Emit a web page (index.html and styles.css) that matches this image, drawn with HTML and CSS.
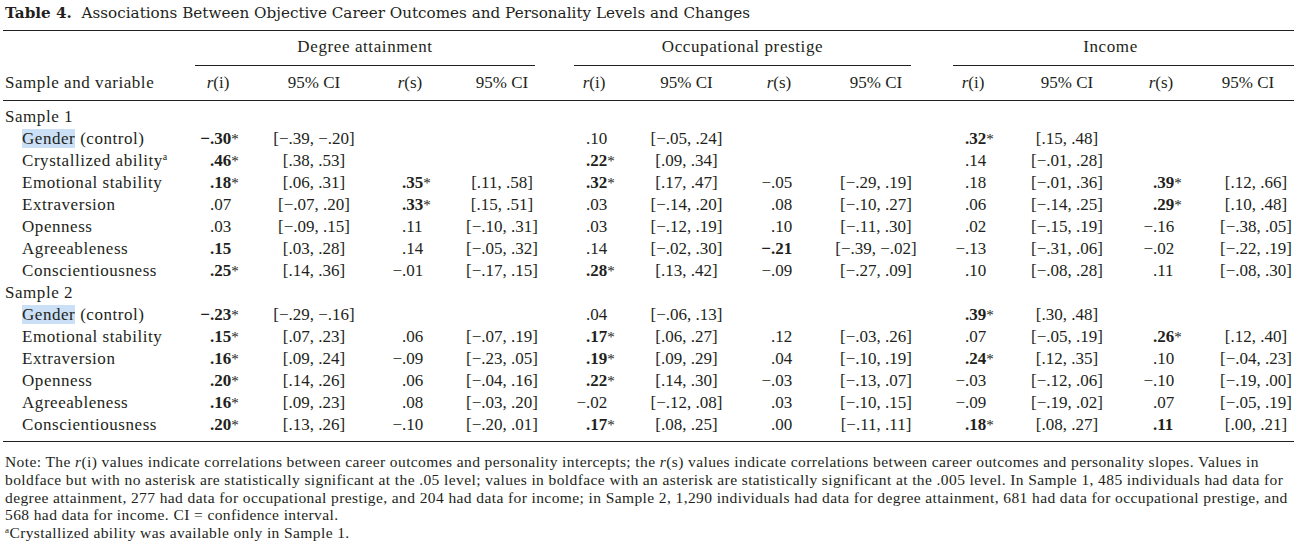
FILE: index.html
```html
<!DOCTYPE html>
<html>
<head>
<meta charset="utf-8">
<title>Table 4</title>
<link rel="stylesheet" href="styles.css">
</head>
<body>
<div class="title"><b>Table 4.</b>&nbsp; Associations Between Objective Career Outcomes and Personality Levels and Changes</div>
<div class="rule"></div>
<div class="groups">
  <div></div>
  <div class="grp deg">Degree attainment</div>
  <div class="grp occ">Occupational prestige</div>
  <div class="grp inc">Income</div>
</div>
<div class="row head">
  <div class="sample">Sample and variable</div>
  <div class="hc"><i>r</i>(i)</div><div class="hc">95% CI</div><div class="hc"><i>r</i>(s)</div><div class="hc">95% CI</div>
  <div class="hc"><i>r</i>(i)</div><div class="hc">95% CI</div><div class="hc"><i>r</i>(s)</div><div class="hc">95% CI</div>
  <div class="hc"><i>r</i>(i)</div><div class="hc">95% CI</div><div class="hc"><i>r</i>(s)</div><div class="hc">95% CI</div>
</div>
<div class="rule"></div>
<div class="body">
  <div class="row"><div class="sample">Sample 1</div></div>
  <div class="row">
    <div class="lab"><span class="hl">Gender</span> (control)</div>
    <div class="r"><b><span class="m">−</span>.30</b><span class="st">*</span></div><div class="ci">[−.39, −.20]</div><div></div><div></div>
    <div class="r">.10</div><div class="ci">[−.05, .24]</div><div></div><div></div>
    <div class="r"><b>.32</b><span class="st">*</span></div><div class="ci">[.15, .48]</div><div></div><div></div>
  </div>
  <div class="row">
    <div class="lab">Crystallized ability<span class="sup">a</span></div>
    <div class="r"><b>.46</b><span class="st">*</span></div><div class="ci">[.38, .53]</div><div></div><div></div>
    <div class="r"><b>.22</b><span class="st">*</span></div><div class="ci">[.09, .34]</div><div></div><div></div>
    <div class="r">.14</div><div class="ci">[−.01, .28]</div><div></div><div></div>
  </div>
  <div class="row">
    <div class="lab">Emotional stability</div>
    <div class="r"><b>.18</b><span class="st">*</span></div><div class="ci">[.06, .31]</div><div class="r"><b>.35</b><span class="st">*</span></div><div class="ci">[.11, .58]</div>
    <div class="r"><b>.32</b><span class="st">*</span></div><div class="ci">[.17, .47]</div><div class="r"><span class="m">−</span>.05</div><div class="ci">[−.29, .19]</div>
    <div class="r">.18</div><div class="ci">[−.01, .36]</div><div class="r"><b>.39</b><span class="st">*</span></div><div class="ci cl">[.12, .66]</div>
  </div>
  <div class="row">
    <div class="lab">Extraversion</div>
    <div class="r">.07</div><div class="ci">[−.07, .20]</div><div class="r"><b>.33</b><span class="st">*</span></div><div class="ci">[.15, .51]</div>
    <div class="r">.03</div><div class="ci">[−.14, .20]</div><div class="r">.08</div><div class="ci">[−.10, .27]</div>
    <div class="r">.06</div><div class="ci">[−.14, .25]</div><div class="r"><b>.29</b><span class="st">*</span></div><div class="ci cl">[.10, .48]</div>
  </div>
  <div class="row">
    <div class="lab">Openness</div>
    <div class="r">.03</div><div class="ci">[−.09, .15]</div><div class="r">.11</div><div class="ci">[−.10, .31]</div>
    <div class="r">.03</div><div class="ci">[−.12, .19]</div><div class="r">.10</div><div class="ci">[−.11, .30]</div>
    <div class="r">.02</div><div class="ci">[−.15, .19]</div><div class="r"><span class="m">−</span>.16</div><div class="ci cl">[−.38, .05]</div>
  </div>
  <div class="row">
    <div class="lab">Agreeableness</div>
    <div class="r"><b>.15</b></div><div class="ci">[.03, .28]</div><div class="r">.14</div><div class="ci">[−.05, .32]</div>
    <div class="r">.14</div><div class="ci">[−.02, .30]</div><div class="r"><b><span class="m">−</span>.21</b></div><div class="ci">[−.39, −.02]</div>
    <div class="r"><span class="m">−</span>.13</div><div class="ci">[−.31, .06]</div><div class="r"><span class="m">−</span>.02</div><div class="ci cl">[−.22, .19]</div>
  </div>
  <div class="row">
    <div class="lab">Conscientiousness</div>
    <div class="r"><b>.25</b><span class="st">*</span></div><div class="ci">[.14, .36]</div><div class="r"><span class="m">−</span>.01</div><div class="ci">[−.17, .15]</div>
    <div class="r"><b>.28</b><span class="st">*</span></div><div class="ci">[.13, .42]</div><div class="r"><span class="m">−</span>.09</div><div class="ci">[−.27, .09]</div>
    <div class="r">.10</div><div class="ci">[−.08, .28]</div><div class="r">.11</div><div class="ci cl">[−.08, .30]</div>
  </div>
  <div class="row"><div class="sample">Sample 2</div></div>
  <div class="row">
    <div class="lab"><span class="hl">Gender</span> (control)</div>
    <div class="r"><b><span class="m">−</span>.23</b><span class="st">*</span></div><div class="ci">[−.29, −.16]</div><div></div><div></div>
    <div class="r">.04</div><div class="ci">[−.06, .13]</div><div></div><div></div>
    <div class="r"><b>.39</b><span class="st">*</span></div><div class="ci">[.30, .48]</div><div></div><div></div>
  </div>
  <div class="row">
    <div class="lab">Emotional stability</div>
    <div class="r"><b>.15</b><span class="st">*</span></div><div class="ci">[.07, .23]</div><div class="r">.06</div><div class="ci">[−.07, .19]</div>
    <div class="r"><b>.17</b><span class="st">*</span></div><div class="ci">[.06, .27]</div><div class="r">.12</div><div class="ci">[−.03, .26]</div>
    <div class="r">.07</div><div class="ci">[−.05, .19]</div><div class="r"><b>.26</b><span class="st">*</span></div><div class="ci cl">[.12, .40]</div>
  </div>
  <div class="row">
    <div class="lab">Extraversion</div>
    <div class="r"><b>.16</b><span class="st">*</span></div><div class="ci">[.09, .24]</div><div class="r"><span class="m">−</span>.09</div><div class="ci">[−.23, .05]</div>
    <div class="r"><b>.19</b><span class="st">*</span></div><div class="ci">[.09, .29]</div><div class="r">.04</div><div class="ci">[−.10, .19]</div>
    <div class="r"><b>.24</b><span class="st">*</span></div><div class="ci">[.12, .35]</div><div class="r">.10</div><div class="ci cl">[−.04, .23]</div>
  </div>
  <div class="row">
    <div class="lab">Openness</div>
    <div class="r"><b>.20</b><span class="st">*</span></div><div class="ci">[.14, .26]</div><div class="r">.06</div><div class="ci">[−.04, .16]</div>
    <div class="r"><b>.22</b><span class="st">*</span></div><div class="ci">[.14, .30]</div><div class="r"><span class="m">−</span>.03</div><div class="ci">[−.13, .07]</div>
    <div class="r"><span class="m">−</span>.03</div><div class="ci">[−.12, .06]</div><div class="r"><span class="m">−</span>.10</div><div class="ci cl">[−.19, .00]</div>
  </div>
  <div class="row">
    <div class="lab">Agreeableness</div>
    <div class="r"><b>.16</b><span class="st">*</span></div><div class="ci">[.09, .23]</div><div class="r">.08</div><div class="ci">[−.03, .20]</div>
    <div class="r"><span class="m">−</span>.02</div><div class="ci">[−.12, .08]</div><div class="r">.03</div><div class="ci">[−.10, .15]</div>
    <div class="r"><span class="m">−</span>.09</div><div class="ci">[−.19, .02]</div><div class="r">.07</div><div class="ci cl">[−.05, .19]</div>
  </div>
  <div class="row">
    <div class="lab">Conscientiousness</div>
    <div class="r"><b>.20</b><span class="st">*</span></div><div class="ci">[.13, .26]</div><div class="r"><span class="m">−</span>.10</div><div class="ci">[−.20, .01]</div>
    <div class="r"><b>.17</b><span class="st">*</span></div><div class="ci">[.08, .25]</div><div class="r">.00</div><div class="ci">[−.11, .11]</div>
    <div class="r"><b>.18</b><span class="st">*</span></div><div class="ci">[.08, .27]</div><div class="r"><b>.11</b></div><div class="ci cl">[.00, .21]</div>
  </div>
</div>
<div class="rule"></div>
<div class="notes">
  <p>Note: The <i>r</i>(i) values indicate correlations between career outcomes and personality intercepts; the <i>r</i>(s) values indicate correlations between career outcomes and personality slopes. Values in</p>
  <p>boldface but with no asterisk are statistically significant at the .05 level; values in boldface with an asterisk are statistically significant at the .005 level. In Sample 1, 485 individuals had data for</p>
  <p>degree attainment, 277 had data for occupational prestige, and 204 had data for income; in Sample 2, 1,290 individuals had data for degree attainment, 681 had data for occupational prestige, and</p>
  <p>568 had data for income. CI = confidence interval.</p>
  <p><span class="fsup">a</span>Crystallized ability was available only in Sample 1.</p>
</div>
</body>
</html>
```
FILE: styles.css
```css
:root {
  --cols: 190px 56px 136px 56px 128px 56px 129px 56px 138px 56px 132px 56px 118px;
  --ink: #231f20;
}
html, body {
  margin: 0;
  background: #ffffff;
}
body {
  width: 1307px;
  overflow: hidden;
  padding-top: 3px;
  font-family: "Liberation Serif", "Times New Roman", serif;
  font-size: 17px;
  color: var(--ink);
}
.title {
  font-family: "DejaVu Serif", serif;
  font-size: 15.2px;
  line-height: 20px;
  height: 20px;
  padding-left: 5px;
  margin-bottom: 7px;
  white-space: nowrap;
}
.title b {
  font-weight: bold;
}
.rule {
  width: 1291px;
  height: 1px;
  margin-left: 3px;
  background: var(--ink);
}
.groups {
  display: grid;
  grid-template-columns: 190px 376px 379px 362px;
}
.grp {
  padding-top: 6px;
  height: 28px;
  line-height: 20px;
  text-align: center;
  border-bottom: 1px solid var(--ink);
  white-space: nowrap;
  letter-spacing: 0.6px;
}
.grp.deg { margin: 0 31px 0 5px; }
.grp.occ { margin: 0 34px 0 8px; }
.grp.inc { margin: 0 13px 0 8px; padding-right: 26px; }
.row {
  display: grid;
  grid-template-columns: var(--cols);
  height: 22px;
  line-height: 22px;
  white-space: nowrap;
}
.row.head {
  padding: 6px 0;
}
.hc {
  text-align: center;
}
.body {
  padding: 5px 0;
}
.sample {
  padding-left: 5px;
  letter-spacing: 0.55px;
}
.lab {
  padding-left: 22px;
  letter-spacing: 0.55px;
}
.hl {
  background: #cbdff6;
}
.sup {
  font-size: 10px;
  vertical-align: 6px;
  line-height: 0;
}
.r {
  padding-left: 20px;
}
.m {
  display: inline-block;
  width: 10px;
  margin-left: -10px;
  text-align: right;
}
.st {
  font-weight: normal;
  font-size: 15px;
}
.ci {
  text-align: center;
}
.ci.cl {
  padding-left: 16px;
}
.notes {
  margin-top: 11px;
  padding-left: 5px;
  font-size: 15.5px;
  letter-spacing: 0.4px;
  line-height: 17.75px;
  white-space: nowrap;
}
.notes p {
  margin: 0;
}
.fsup {
  font-size: 9px;
  vertical-align: 5px;
  line-height: 0;
}
```
